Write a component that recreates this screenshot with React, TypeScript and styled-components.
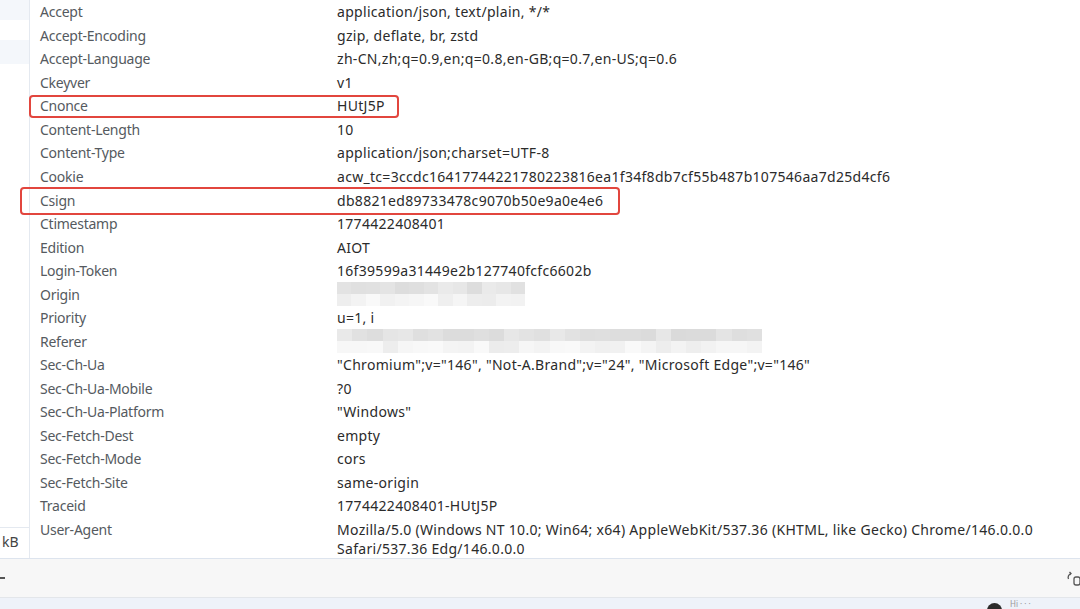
import React from "react";
import styled, { createGlobalStyle } from "styled-components";

const Global = createGlobalStyle`
  html, body { margin: 0; padding: 0; background: #ffffff; }
  body { font-family: "Segoe UI", "Noto Sans", "Open Sans", sans-serif; }
  * { box-sizing: border-box; }
`;

const Page = styled.div`
  width: 1080px;
  height: 609px;
  overflow: hidden;
  display: flex;
  flex-direction: column;
  background: #fff;
`;

const Main = styled.div`
  height: 559px;
  flex: none;
  display: flex;
  border-bottom: 1px solid #dde4ee;
  overflow: hidden;
`;

const SidePanel = styled.div`
  width: 30px;
  flex: none;
  border-right: 1px solid #e4e9f0;
  display: flex;
  flex-direction: column;
`;

const SideStripe = styled.div<{ $tint: boolean; $h: number }>`
  height: ${(p) => p.$h}px;
  background: ${(p) => (p.$tint ? "#f4f7fb" : "#ffffff")};
`;

const SideFill = styled.div`
  flex: 1;
`;

const SideSize = styled.div`
  border-top: 1px solid #e4e9f0;
  height: 31px;
  padding: 4px 0 0 2px;
  font-size: 14px;
  color: #444;
  line-height: 20px;
`;

const Table = styled.div`
  position: relative;
  flex: 1;
  padding-left: 10px;
`;

const Row = styled.div`
  display: grid;
  grid-template-columns: 297px 1fr;
  align-items: start;
  padding: 2.27px 0;
  font-size: 14px;
  line-height: 19px;
`;

const Name = styled.div`
  color: #555a60;
  letter-spacing: -0.25px;
  white-space: nowrap;
`;

const Value = styled.div`
  color: #2b2b2b;
  letter-spacing: 0.3px;
  white-space: pre-wrap;
  padding-right: 40px;
`;

const Highlight = styled.div<{ $l: number; $t: number; $w: number; $h: number }>`
  position: absolute;
  left: ${(p) => p.$l}px;
  top: ${(p) => p.$t}px;
  width: ${(p) => p.$w}px;
  height: ${(p) => p.$h}px;
  border: 2.5px solid #e2463e;
  border-radius: 4px;
  pointer-events: none;
`;

const Mosaic = styled.div<{ $w: number; $cols: number }>`
  width: ${(p) => p.$w}px;
  height: 23.54px;
  margin: -2.27px 0;
  display: grid;
  grid-template-columns: repeat(${(p) => p.$cols}, 1fr);
  grid-template-rows: 12px 11.54px;
`;

const Cell = styled.div`
  height: 100%;
`;

const BottomBar = styled.div`
  height: 39px;
  flex: none;
  background: #f7f7f7;
  border-bottom: 1px solid #e3e6ea;
  display: flex;
  align-items: center;
  justify-content: space-between;
  color: #666;
  font-size: 14px;
`;

const Dash = styled.span`
  display: block;
  width: 5px;
  height: 1.5px;
  background: #555;
`;

const StatusStrip = styled.div`
  flex: 1;
  min-height: 0;
  overflow: hidden;
  background: #eef2f9;
  display: flex;
  align-items: flex-start;
  justify-content: flex-end;
  gap: 8px;
  padding-right: 4px;
`;

const Avatar = styled.div`
  flex: none;
  width: 15px;
  height: 15px;
  border-radius: 50%;
  background: #2b2b2b;
  margin-top: 5px;
`;

const StatusText = styled.span`
  font-size: 8px;
  color: #999;
  line-height: 9px;
  margin-top: 1px;
  width: 46px;
`;

const Spacer = styled.span`
  width: 12px;
`;

function hash(i: number) {
  const x = Math.sin(i * 12.9898) * 43758.5453;
  return x - Math.floor(x);
}

function Blur({ width, seed }: { width: number; seed: number }) {
  const cols = Math.round(width / 15);
  const cells = [];
  for (let r = 0; r < 2; r++) {
    for (let c = 0; c < cols; c++) {
      const v = hash(seed + r * 100 + c);
      const base = r === 0 ? 218 : 236;
      const g = Math.round(base + v * (r === 0 ? 16 : 14));
      cells.push(
        <Cell key={`${r}-${c}`} style={{ background: `rgb(${g},${g},${g})` }} />
      );
    }
  }
  return (
    <Mosaic $w={width} $cols={cols}>
      {cells}
    </Mosaic>
  );
}

type H = { name: string; value?: string; blur?: { w: number; seed: number } };

const headers: H[] = [
  { name: "Accept", value: "application/json, text/plain, */*" },
  { name: "Accept-Encoding", value: "gzip, deflate, br, zstd" },
  { name: "Accept-Language", value: "zh-CN,zh;q=0.9,en;q=0.8,en-GB;q=0.7,en-US;q=0.6" },
  { name: "Ckeyver", value: "v1" },
  { name: "Cnonce", value: "HUtJ5P" },
  { name: "Content-Length", value: "10" },
  { name: "Content-Type", value: "application/json;charset=UTF-8" },
  { name: "Cookie", value: "acw_tc=3ccdc16417744221780223816ea1f34f8db7cf55b487b107546aa7d25d4cf6" },
  { name: "Csign", value: "db8821ed89733478c9070b50e9a0e4e6" },
  { name: "Ctimestamp", value: "1774422408401" },
  { name: "Edition", value: "AIOT" },
  { name: "Login-Token", value: "16f39599a31449e2b127740fcfc6602b" },
  { name: "Origin", blur: { w: 188, seed: 3 } },
  { name: "Priority", value: "u=1, i" },
  { name: "Referer", blur: { w: 425, seed: 41 } },
  { name: "Sec-Ch-Ua", value: "\"Chromium\";v=\"146\", \"Not-A.Brand\";v=\"24\", \"Microsoft Edge\";v=\"146\"" },
  { name: "Sec-Ch-Ua-Mobile", value: "?0" },
  { name: "Sec-Ch-Ua-Platform", value: "\"Windows\"" },
  { name: "Sec-Fetch-Dest", value: "empty" },
  { name: "Sec-Fetch-Mode", value: "cors" },
  { name: "Sec-Fetch-Site", value: "same-origin" },
  { name: "Traceid", value: "1774422408401-HUtJ5P" },
  {
    name: "User-Agent",
    value:
      "Mozilla/5.0 (Windows NT 10.0; Win64; x64) AppleWebKit/537.36 (KHTML, like Gecko) Chrome/146.0.0.0 Safari/537.36 Edg/146.0.0.0",
  },
];

function RefreshIcon() {
  return (
    <svg width="14" height="16" viewBox="0 0 14 16" fill="none" stroke="#555" strokeWidth="1.3">
      <path d="M5 3.5 A4 4 0 0 0 2.5 9" />
      <path d="M3.5 2 L5 3.5 L3.5 5" />
      <rect x="8" y="7" width="6" height="8" rx="2" />
    </svg>
  );
}

export default function App() {
  return (
    <Page>
      <Global />
      <Main>
        <SidePanel>
          <SideStripe $tint $h={20} />
          <SideStripe $tint={false} $h={20} />
          <SideStripe $tint $h={24} />
          <SideFill />
          <SideSize>kB</SideSize>
        </SidePanel>
        <Table>
          {headers.map((h) => (
            <Row key={h.name}>
              <Name>{h.name}</Name>
              {h.blur ? <Blur width={h.blur.w} seed={h.blur.seed} /> : <Value>{h.value}</Value>}
            </Row>
          ))}
          <Highlight $l={-1} $t={95} $w={370} $h={23} />
          <Highlight $l={-10} $t={187} $w={600} $h={28} />
        </Table>
      </Main>
      <BottomBar>
        <Dash />
        <RefreshIcon />
      </BottomBar>
      <StatusStrip>
        <Avatar />
        <StatusText>Hi · · ·</StatusText>
        <Spacer />
      </StatusStrip>
    </Page>
  );
}
